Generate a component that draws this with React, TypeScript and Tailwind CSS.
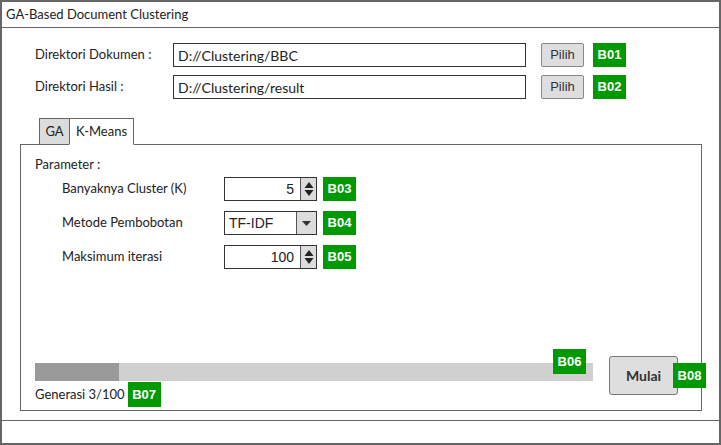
import React from "react";

const LABEL_FONT = "font-['Lato','Open_Sans',sans-serif]";
const ARIAL = "font-['Liberation_Sans',Arial,sans-serif]";

function Badge({ id, className = "" }: { id: string; className?: string }) {
  return (
    <div
      className={`w-[33px] h-[24px] bg-[#009a00] text-white text-[13px] font-bold flex items-center justify-center ${ARIAL} ${className}`}
    >
      {id}
    </div>
  );
}

function SpinArrows() {
  return (
    <svg width="10" height="16" viewBox="0 0 10 16" aria-hidden="true">
      <path d="M5 1 L9.5 7 L0.5 7 Z" fill="#222" />
      <path d="M0.5 9 L9.5 9 L5 15 Z" fill="#222" />
    </svg>
  );
}

function NumberField({ value }: { value: string }) {
  return (
    <div className="w-[93px] h-[24px] border border-[#333] flex bg-white">
      <div className={`flex-1 flex items-center justify-end pr-[6px] text-[14px] text-[#222] ${ARIAL}`}>{value}</div>
      <div className="w-[16px] border-l border-[#555] bg-[#dcdcdc] flex items-center justify-center">
        <SpinArrows />
      </div>
    </div>
  );
}

function SelectField({ value }: { value: string }) {
  return (
    <div className="w-[93px] h-[24px] border border-[#333] flex bg-white">
      <div className={`flex-1 flex items-center pl-[4px] text-[14px] text-[#222] ${ARIAL}`}>{value}</div>
      <div className="w-[20px] border-l border-[#555] bg-[#dcdcdc] flex items-center justify-center">
        <svg width="9" height="5" viewBox="0 0 9 5" aria-hidden="true">
          <path d="M0 0 L9 0 L4.5 5 Z" fill="#333" />
        </svg>
      </div>
    </div>
  );
}

function DirRow({ label, value, badge }: { label: string; value: string; badge: string }) {
  return (
    <div className="flex items-center h-[24px]">
      <div className="w-[138px] text-[13px] text-[#222]">{label}</div>
      <div className="w-[353px] h-[24px] border border-[#333] flex items-center pl-[4px] text-[14px] text-[#222]">
        {value}
      </div>
      <button
        className={`ml-[15px] w-[43px] h-[24px] bg-[#dedede] border border-[#888] rounded-[2px] text-[13px] text-[#333] ${ARIAL}`}
      >
        Pilih
      </button>
      <Badge id={badge} className="ml-[9px]" />
    </div>
  );
}

function ParamRow({ label, children, badge }: { label: string; children: React.ReactNode; badge: string }) {
  return (
    <div className="flex items-center h-[24px]">
      <div className="w-[162px] text-[13px] text-[#222]">{label}</div>
      {children}
      <Badge id={badge} className="ml-[6px]" />
    </div>
  );
}

export default function App() {
  return (
    <div className={`w-[721px] h-[445px] border-2 border-[#666] bg-white flex flex-col ${LABEL_FONT}`}>
      {/* Judul */}
      <div className="h-[26px] border-b border-[#666] flex items-center pl-[4px] text-[13px] text-[#222]">
        GA-Based Document Clustering
      </div>

      <div className="flex-1 flex flex-col pt-[15px]">
        <div className="pl-[33px] flex flex-col gap-[8px]">
          <DirRow label="Direktori Dokumen :" value="D://Clustering/BBC" badge="B01" />
          <DirRow label="Direktori Hasil :" value="D://Clustering/result" badge="B02" />
        </div>

        {/* Tabs */}
        <div className="ml-[18px] mt-[19px] w-[682px]">
          <div className="flex pl-[19px] relative z-10">
            <div className="w-[31px] h-[27px] border border-[#666] bg-[#dcdcdc] flex items-center justify-center text-[13px] text-[#222]">
              GA
            </div>
            <div className="-ml-px w-[65px] h-[27px] border border-[#666] border-b-white bg-white flex items-center justify-center text-[13px] text-[#222]">
              K-Means
            </div>
          </div>
          <div className="-mt-px h-[267px] border border-[#666] flex flex-col pl-[14px] pt-[11px] pb-[3px]">
            <div className="text-[13px] text-[#222] leading-[16px]">Parameter :</div>
            <div className="pl-[27px] mt-[5px] flex flex-col gap-[10px]">
              <ParamRow label="Banyaknya Cluster (K)" badge="B03">
                <NumberField value="5" />
              </ParamRow>
              <ParamRow label="Metode Pembobotan" badge="B04">
                <SelectField value="TF-IDF" />
              </ParamRow>
              <ParamRow label="Maksimum iterasi" badge="B05">
                <NumberField value="100" />
              </ParamRow>
            </div>

            <div className="mt-auto flex items-start">
              <div className="w-[558px] pt-[18px]">
                <div className="relative h-[18px] bg-[#d0d0d0]">
                  <div className="h-full w-[84px] bg-[#9a9a9a]" />
                  <Badge id="B06" className="absolute left-[518px] top-[-14px] h-[25px]" />
                </div>
                <div className="flex items-center mt-px">
                  <span className="text-[13px] text-[#222]">Generasi 3/100</span>
                  <Badge id="B07" className="ml-[3px] h-[25px]" />
                </div>
              </div>
              <div className="relative ml-[16px] mt-[11px]">
                <button className="w-[69px] h-[39px] bg-[#dedede] border border-[#777] rounded-[3px] text-[14px] font-bold text-[#333]">
                  Mulai
                </button>
                <Badge id="B08" className="absolute left-[64px] top-[7px] h-[25px]" />
              </div>
            </div>
          </div>
        </div>
      </div>

      {/* Status bar */}
      <div className="h-[23px] border-t border-[#666]" />
    </div>
  );
}
